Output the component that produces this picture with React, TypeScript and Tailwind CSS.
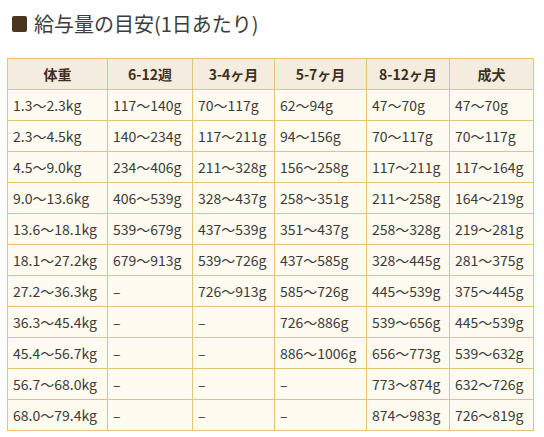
const headers = ["体重", "6-12週", "3-4ヶ月", "5-7ヶ月", "8-12ヶ月", "成犬"];

const rows: string[][] = [
  ["1.3～2.3kg", "117～140g", "70～117g", "62～94g", "47～70g", "47～70g"],
  ["2.3～4.5kg", "140～234g", "117～211g", "94～156g", "70～117g", "70～117g"],
  ["4.5～9.0kg", "234～406g", "211～328g", "156～258g", "117～211g", "117～164g"],
  ["9.0～13.6kg", "406～539g", "328～437g", "258～351g", "211～258g", "164～219g"],
  ["13.6～18.1kg", "539～679g", "437～539g", "351～437g", "258～328g", "219～281g"],
  ["18.1～27.2kg", "679～913g", "539～726g", "437～585g", "328～445g", "281～375g"],
  ["27.2～36.3kg", "–", "726～913g", "585～726g", "445～539g", "375～445g"],
  ["36.3～45.4kg", "–", "–", "726～886g", "539～656g", "445～539g"],
  ["45.4～56.7kg", "–", "–", "886～1006g", "656～773g", "539～632g"],
  ["56.7～68.0kg", "–", "–", "–", "773～874g", "632～726g"],
  ["68.0～79.4kg", "–", "–", "–", "874～983g", "726～819g"],
];

const widths = ["w-[100px]", "w-[85px]", "w-[82px]", "w-[92px]", "w-[83px]", "w-[84px]"];

export default function App() {
  return (
    <div
      className="min-h-screen bg-white px-[7px] pt-[12px] text-[#3a3a3a]"
      style={{ fontFamily: '"Noto Sans CJK JP", "Noto Sans", sans-serif' }}
    >
      {/* 見出し */}
      <h2 className="flex items-center gap-[7px] pl-[5px] text-[20px] leading-[24px] text-[#3d3d3d]">
        <span className="inline-block h-[16px] w-[15px] rounded-[2px] bg-[#4a3520]" />
        給与量の目安(1日あたり)
      </h2>

      <table className="mt-[22px] w-[526px] table-fixed border-collapse bg-[#fffbf0] text-[14px]">
        <thead>
          <tr className="h-[31px] bg-[#f3ecdf]">
            {headers.map((h, i) => (
              <th
                key={h}
                className={`${widths[i]} border border-[#e4c470] text-center font-bold text-[#3d3020]`}
              >
                {h}
              </th>
            ))}
          </tr>
        </thead>
        <tbody>
          {rows.map((r) => (
            <tr key={r[0]} className="h-[31px]">
              {r.map((c, i) => (
                <td key={i} className="border border-[#e4c470] pl-[5px] text-left whitespace-nowrap">
                  {c}
                </td>
              ))}
            </tr>
          ))}
        </tbody>
      </table>
    </div>
  );
}
